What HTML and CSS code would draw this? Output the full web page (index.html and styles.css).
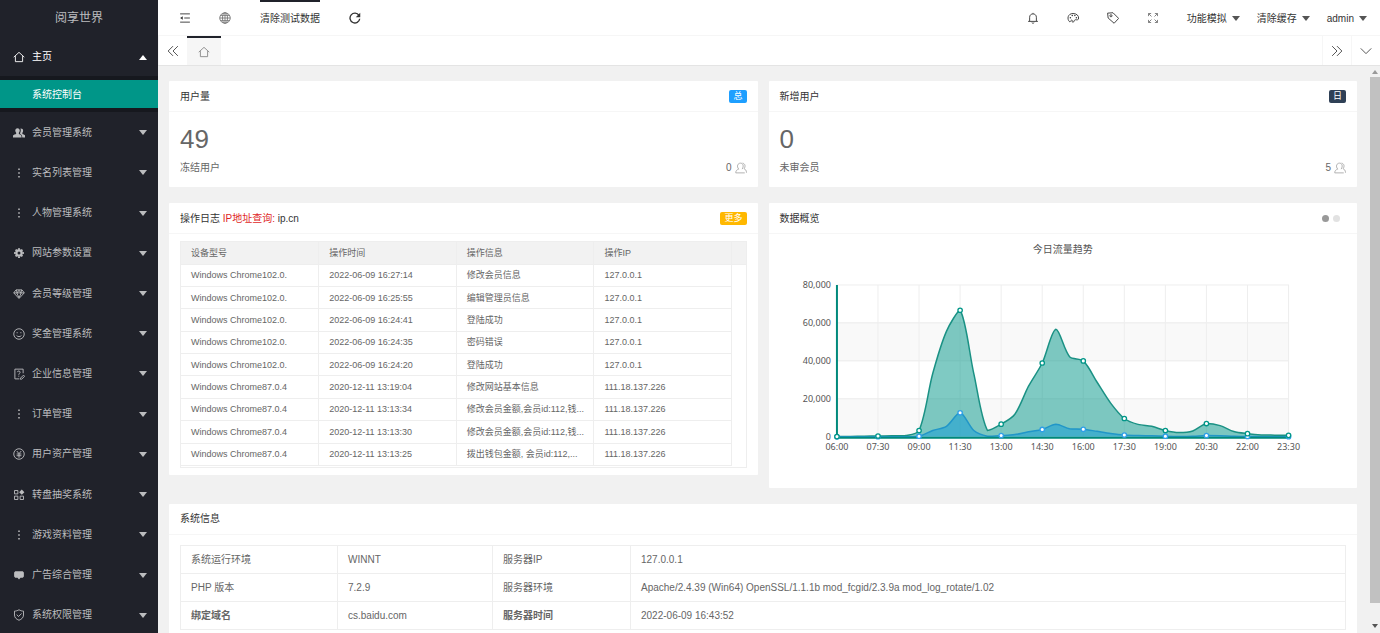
FILE: index.html
```
<!doctype html>
<html lang="zh-CN">
<head>
<meta charset="utf-8">
<title>阅享世界</title>
<link rel="stylesheet" href="styles.css">
</head>
<body>
<svg class="defs" aria-hidden="true">
	<symbol id="i-home" viewBox="0 0 16 16"><path d="M1 8.2 8 1.8l7 6.4M3.2 6.8v7.4h9.6V6.8"/></symbol>
	<symbol id="i-users" viewBox="0 0 16 16"><path class="fill" d="M6 1.500c2 0 3 1.300 3 3.200 0 1.400-.5 2.300-1.200 3v1.600c2 .8 3.700 1.300 3.700 4.700H-1c0-3.400 3-3.900 5.200-4.700V7.700C3.500 7 3 6.100 3 4.700 3 2.800 4 1.500 6 1.500z"/><path class="fill" d="M10 2c2.300-.2 3.500 1 3.500 3 0 1.200-.5 2-1 2.600v1.600c2 .7 4.500 1.500 4.500 4.800h-4.600c0-3-1.200-4-2.900-4.800V7.900C10.500 6 10.600 4 10 2z"/></symbol>
	<symbol id="i-dots" viewBox="0 0 16 16"><path class="fill" d="M7 2h2v2H7zM7 7h2v2H7zM7 12h2v2H7z"/></symbol>
	<symbol id="i-gear" viewBox="0 0 16 16"><circle cx="8" cy="8" r="3.500" stroke-width="3"/><path stroke-width="2.600" d="M8 1.500v2M8 12.500v2M1.500 8h2M12.500 8h2M3.500 3.500l1.300 1.300M11.200 11.200l1.300 1.300M12.500 3.500l-1.300 1.300M4.800 11.200l-1.300 1.300"/></symbol>
	<symbol id="i-gem" viewBox="0 0 16 16"><path d="M4 2.500h8L15 6.500 8 14 1 6.500zM1 6.500h14M5 6.500 8 13l3-6.500M4.500 2.800 5.500 6.500 8 3l2.500 3.500 1-3.700"/></symbol>
	<symbol id="i-smile" viewBox="0 0 16 16"><circle cx="8" cy="8" r="7"/><path d="M5.500 5.500v1.500M10.500 5.500v1.500M4.800 10c1.500 2 4.900 2 6.400 0"/></symbol>
	<symbol id="i-form" viewBox="0 0 16 16"><path d="M13.500 7V1.500h-11v13h6M5.800 5.500c.2-2 3.700-2 3.700.2C9.500 7.200 7.700 7 7.700 9M7.700 10.300v1.200M10 13.500l4-4 1.500 1.500-4 4H10z"/></symbol>
	<symbol id="i-yen" viewBox="0 0 16 16"><circle cx="8" cy="8" r="7"/><path d="M5 4l3 3.500L11 4M4.800 8h6.400M4.800 10.300h6.400M8 7.500V13"/></symbol>
	<symbol id="i-grid" viewBox="0 0 16 16"><path d="M2 2h4.500v4.500H2zM2 9.500h4.500V14H2zM9.500 9.500H14V14H9.500z"/><path class="fill" d="M11.700.8l3.500 3.500-3.500 3.500-3.500-3.500z"/></symbol>
	<symbol id="i-board" viewBox="0 0 16 16"><path class="fill" d="M3 3h10l1.500 1.500v5.500L13 11.500h-3l-2 2.500-2-2.500H3L1.500 10V4.500z"/></symbol>
	<symbol id="i-shield" viewBox="0 0 16 16"><path d="M8 1c2 1.300 4 1.800 6 1.800V8c0 3.500-2.500 5.700-6 7-3.500-1.300-6-3.500-6-7V2.800C4 2.800 6 2.300 8 1zM5 7.500l2.300 2.500L11.500 6"/></symbol>
	<symbol id="i-menu" viewBox="0 0 16 16"><path d="M1.500 2.500h13M7 8h7.500M1.500 13.500h13"/><path class="fill" d="M1.500 8 5 5.800v4.400z"/></symbol>
	<symbol id="i-globe" viewBox="0 0 16 16"><circle cx="8" cy="8" r="7"/><ellipse cx="8" cy="8" rx="3.300" ry="7"/><path d="M8 1v14M1 8h14M2.200 4.500h11.600M2.200 11.500h11.600"/></symbol>
	<symbol id="i-refresh" viewBox="0 0 16 16"><path stroke-width="1.800" d="M13.300 4.500A6.500 6.500 0 1 0 14.300 9"/><path class="fill" d="M15 1v6H9z"/></symbol>
	<symbol id="i-bell" viewBox="0 0 16 16"><path d="M8 1.200v1M3.500 12.200V7c0-6 9-6 9 0v5.200M1.500 12.500h13M6.300 14c.6 1.200 2.800 1.200 3.400 0"/></symbol>
	<symbol id="i-palette" viewBox="0 0 16 16"><path d="M3.500 13C-.5 9.500 1 2 8 2c5 0 7.500 3 7.500 6 0 3-2.500 2.500-4 2.300-2 0-1.500 1.700-2.500 2.700-1.500 1.300-2.500.3-2-1 .5-1.700-1.700-1.200-2-.3-.3.700-.5 1.300-1.500 1.300z"/><circle class="fill" cx="4.500" cy="7.500" r="1"/><circle class="fill" cx="7" cy="4.800" r="1"/><circle class="fill" cx="10.500" cy="4.800" r="1"/><circle class="fill" cx="12.500" cy="7.500" r="1"/></symbol>
	<symbol id="i-tag" viewBox="0 0 16 16"><path d="M.8 1.500 8 1l7.500 7.500-6 6.500L1.500 8z"/><circle cx="5.300" cy="5" r="1.400"/></symbol>
	<symbol id="i-full" viewBox="0 0 16 16"><path d="M2 5.500V2h3.500M2 2l4 4M10.500 2H14v3.500M14 2l-4 4M2 10.500V14h3.500M2 14l4-4M14 10.500V14h-3.500M14 14l-4-4"/></symbol>
	<symbol id="i-left" viewBox="0 0 16 16"><path d="M8 1.500 1.500 8 8 14.500M14.500 1.500 8 8l6.500 6.500"/></symbol>
	<symbol id="i-right" viewBox="0 0 16 16"><path d="M1.500 1.500 8 8l-6.500 6.500M8 1.500 14.500 8 8 14.500"/></symbol>
	<symbol id="i-down" viewBox="0 0 16 16"><path d="M1 4.500l7 7 7-7"/></symbol>
	<symbol id="i-people" viewBox="0 0 16 16"><path d="M1 14.500c0-3 1.500-4.200 4-5C1.500 5.500 4 1.500 7.300 1.500s5 4 2.200 8M1 14.500h12M10 1.500c3.500.5 4.500 4.500 2 7.500 2 .8 3.300 2 3.300 5.300"/></symbol>
</svg>

<div class="app">
	<aside class="side">
		<h1 class="logo">阅享世界</h1>
		<nav>
			<a class="item open" href="#"><svg class="icon"><use href="#i-home"/></svg>主页<i class="caret"></i></a>
			<div class="child"><a href="#">系统控制台</a></div>
			<div class="list">
				<a class="item" href="#"><svg class="icon"><use href="#i-users"/></svg>会员管理系统<i class="caret"></i></a>
				<a class="item" href="#"><svg class="icon"><use href="#i-dots"/></svg>实名列表管理<i class="caret"></i></a>
				<a class="item" href="#"><svg class="icon"><use href="#i-dots"/></svg>人物管理系统<i class="caret"></i></a>
				<a class="item" href="#"><svg class="icon"><use href="#i-gear"/></svg>网站参数设置<i class="caret"></i></a>
				<a class="item" href="#"><svg class="icon"><use href="#i-gem"/></svg>会员等级管理<i class="caret"></i></a>
				<a class="item" href="#"><svg class="icon"><use href="#i-smile"/></svg>奖金管理系统<i class="caret"></i></a>
				<a class="item" href="#"><svg class="icon"><use href="#i-form"/></svg>企业信息管理<i class="caret"></i></a>
				<a class="item" href="#"><svg class="icon"><use href="#i-dots"/></svg>订单管理<i class="caret"></i></a>
				<a class="item" href="#"><svg class="icon"><use href="#i-yen"/></svg>用户资产管理<i class="caret"></i></a>
				<a class="item" href="#"><svg class="icon"><use href="#i-grid"/></svg>转盘抽奖系统<i class="caret"></i></a>
				<a class="item" href="#"><svg class="icon"><use href="#i-dots"/></svg>游戏资料管理<i class="caret"></i></a>
				<a class="item" href="#"><svg class="icon"><use href="#i-board"/></svg>广告综合管理<i class="caret"></i></a>
				<a class="item" href="#"><svg class="icon"><use href="#i-shield"/></svg>系统权限管理<i class="caret"></i></a>
			</div>
		</nav>
	</aside>

	<div class="main">
		<header class="top">
			<button class="ibtn" aria-label="侧边伸缩"><svg class="icon"><use href="#i-menu"/></svg></button>
			<button class="ibtn light" aria-label="前台"><svg class="icon"><use href="#i-globe"/></svg></button>
			<a class="clear" href="#">清除测试数据</a>
			<button class="ibtn" aria-label="刷新"><svg class="icon"><use href="#i-refresh"/></svg></button>
			<div class="right">
				<button class="ibtn" aria-label="消息"><svg class="icon"><use href="#i-bell"/></svg></button>
				<button class="ibtn" aria-label="主题"><svg class="icon"><use href="#i-palette"/></svg></button>
				<button class="ibtn" aria-label="便签"><svg class="icon"><use href="#i-tag"/></svg></button>
				<button class="ibtn light" aria-label="全屏"><svg class="icon"><use href="#i-full"/></svg></button>
				<button class="drop">功能模拟<i class="caret"></i></button>
				<button class="drop">清除缓存<i class="caret"></i></button>
				<button class="drop">admin<i class="caret"></i></button>
			</div>
		</header>
		<div class="tabs">
			<button class="tbtn" aria-label="向左"><svg class="icon"><use href="#i-left"/></svg></button>
			<a class="tab" href="#" aria-label="主页"><svg class="icon"><use href="#i-home"/></svg></a>
			<button class="tbtn end" aria-label="向右"><svg class="icon"><use href="#i-right"/></svg></button>
			<button class="tbtn" aria-label="展开"><svg class="icon"><use href="#i-down"/></svg></button>
		</div>

		<div class="view">
			<div class="content">
				<section class="card">
					<h2>用户量<span class="badge blue">总</span></h2>
					<div class="stat">
						<p class="num">49</p>
						<p class="sub">冻结用户<span>0<svg class="icon"><use href="#i-people"/></svg></span></p>
					</div>
				</section>
				<section class="card">
					<h2>新增用户<span class="badge dark">日</span></h2>
					<div class="stat">
						<p class="num">0</p>
						<p class="sub">未审会员<span>5<svg class="icon"><use href="#i-people"/></svg></span></p>
					</div>
				</section>

				<section class="card log">
					<h2>操作日志&nbsp;<span class="red">IP地址查询:</span>&nbsp;ip.cn<a class="badge orange" href="#">更多</a></h2>
					<div class="logbox">
						<table>
							<thead>
								<tr><th>设备型号</th><th>操作时间</th><th>操作信息</th><th>操作IP</th><th class="gutter"></th></tr>
							</thead>
							<tbody>
								<tr><td>Windows Chrome102.0.</td><td>2022-06-09 16:27:14</td><td>修改会员信息</td><td>127.0.0.1</td></tr>
								<tr><td>Windows Chrome102.0.</td><td>2022-06-09 16:25:55</td><td>编辑管理员信息</td><td>127.0.0.1</td></tr>
								<tr><td>Windows Chrome102.0.</td><td>2022-06-09 16:24:41</td><td>登陆成功</td><td>127.0.0.1</td></tr>
								<tr><td>Windows Chrome102.0.</td><td>2022-06-09 16:24:35</td><td>密码错误</td><td>127.0.0.1</td></tr>
								<tr><td>Windows Chrome102.0.</td><td>2022-06-09 16:24:20</td><td>登陆成功</td><td>127.0.0.1</td></tr>
								<tr><td>Windows Chrome87.0.4</td><td>2020-12-11 13:19:04</td><td>修改网站基本信息</td><td>111.18.137.226</td></tr>
								<tr><td>Windows Chrome87.0.4</td><td>2020-12-11 13:13:34</td><td>修改会员金额,会员id:112,钱...</td><td>111.18.137.226</td></tr>
								<tr><td>Windows Chrome87.0.4</td><td>2020-12-11 13:13:30</td><td>修改会员金额,会员id:112,钱...</td><td>111.18.137.226</td></tr>
								<tr><td>Windows Chrome87.0.4</td><td>2020-12-11 13:13:25</td><td>拨出钱包金额, 会员id:112,...</td><td>111.18.137.226</td></tr>
							</tbody>
						</table>
					</div>
				</section>

				<section class="card">
					<h2>数据概览<span class="dots"><i class="on"></i><i></i></span></h2>
					<svg class="chart" id="chart" viewBox="0 0 589 254"></svg>
				</section>

				<section class="card wide">
					<h2>系统信息</h2>
					<table class="info">
						<tr><td>系统运行环境</td><td>WINNT</td><td>服务器IP</td><td>127.0.0.1</td></tr>
						<tr><td>PHP 版本</td><td>7.2.9</td><td>服务器环境</td><td>Apache/2.4.39 (Win64) OpenSSL/1.1.1b mod_fcgid/2.3.9a mod_log_rotate/1.02</td></tr>
						<tr><th>绑定域名</th><td>cs.baidu.com</td><th>服务器时间</th><td>2022-06-09 16:43:52</td></tr>
					</table>
				</section>
			</div>
			<div class="bar"><i class="caret"></i><div class="thumb"></div><i class="caret"></i></div>
		</div>
	</div>
</div>
<script src="chart.js"></script>
</body>
</html>
```
FILE: styles.css
```
*{
	margin:0;
	padding:0;
	box-sizing:border-box;
}
body{
	font:10px/20px "Liberation Sans","Noto Sans CJK SC",sans-serif;
	color:#555;
	background:#f1f1f1;
}
a{color:inherit;text-decoration:none;}
button{
	border:0;
	background:none;
	font:inherit;
	color:inherit;
}
.defs{display:none;}
.icon{
	width:12px;
	height:12px;
	fill:none;
	stroke:currentColor;
	stroke-width:1.2;
	flex:none;
}
.fill{fill:currentColor;stroke:none;}
.caret{
	border:4px solid transparent;
	border-top:5px solid currentColor;
	border-bottom:0;
}
.app{
	display:flex;
	height:100vh;
	overflow:hidden;
}

/* 左侧菜单 */
.side{
	width:158px;
	flex:none;
	background:#20222a;
	color:#bcbdbf;
}
.logo{
	font-size:12px;
	font-weight:normal;
	line-height:36px;
	text-align:center;
}
.item{
	display:flex;
	align-items:center;
	gap:7px;
	height:40px;
	padding:2px 11px 0 13px;
}
.item .caret{margin-left:auto;}
.open{color:#fff;}
.open .caret{
	border-top:0;
	border-bottom:5px solid currentColor;
}
.child{
	padding:4px 0;
	background:#16181e;
}
.child a{
	display:block;
	padding:2px 0 0 32px;
	line-height:26px;
	background:#009688;
	color:#fff;
}
.list{
	display:grid;
	grid-auto-rows:1fr;
	height:523px;
}
.list .item{
	height:auto;
	padding-top:1px;
}

/* 头部 */
.main{
	flex:1;
	min-width:0;
	display:flex;
	flex-direction:column;
}
.top{
	display:flex;
	height:36px;
	padding:0 10px 0 7px;
	background:#fff;
	border-bottom:1px solid #f6f6f6;
	color:#333;
}
.ibtn{
	width:40px;
	display:flex;
	align-items:center;
	justify-content:center;
	padding-top:1px;
}
.light{color:#777;}
.clear{
	margin:0 15px;
	border-top:2px solid #20222a;
	line-height:33px;
}
.right{
	display:flex;
	margin-left:auto;
}
.drop{
	display:flex;
	align-items:center;
	gap:5px;
	padding:2px 3px 0 14px;
}
.drop .caret{color:#555;}
.tabs{
	display:flex;
	height:29px;
	background:#fff;
	box-shadow:0 1px 0 #e4e4e4;
	color:#444;
	z-index:1;
}
.tbtn{
	width:29px;
	display:flex;
	align-items:center;
	justify-content:center;
	border-left:1px solid #f6f6f6;
}
.end{margin-left:auto;}
.tab{
	width:34px;
	display:flex;
	align-items:center;
	justify-content:center;
	background:#f6f6f6;
	border-top:2px solid #20222a;
	color:#888;
}

/* 内容 */
.view{
	flex:1;
	min-height:0;
	display:flex;
}
.content{
	flex:1;
	min-width:0;
	overflow:auto;
	scrollbar-width:none;
	display:grid;
	grid-template-columns:1fr 1fr;
	gap:16px 11px;
	align-content:start;
	align-items:start;
	padding:16px 12px 16px 11px;
}
.bar{
	width:11px;
	display:flex;
	flex-direction:column;
	align-items:center;
	gap:3px;
	padding:5px 0;
	color:#555;
}
.bar .caret{border-width:4px 3px 0;}
.bar .caret:first-child{
	border-width:0 3px 4px;
	border-bottom-color:#999;
	border-bottom-style:solid;
}
.thumb{
	width:10px;
	flex:1;
	margin-bottom:18px;
	background:#c1c1c1;
}
.card{
	background:#fff;
	border-radius:1px;
}
.card h2{
	display:flex;
	align-items:center;
	height:31px;
	padding:1px 11px 0;
	border-bottom:1px solid #f6f6f6;
	font-size:10px;
	font-weight:normal;
	color:#333;
}
.wide{grid-column:1 / 3;}
.badge{
	margin-left:auto;
	padding:0 4px;
	border-radius:2px;
	font-size:9px;
	line-height:13px;
	color:#fff;
}
.blue{background:#1e9fff;}
.dark{background:#2f4056;}
.orange{background:#ffb800;}
.red{color:#e01f1f;}
.stat{padding:9px 11px 8px;}
.num{
	font-size:26px;
	line-height:36px;
	color:#666;
}
.sub{
	display:flex;
	justify-content:space-between;
	line-height:22px;
	color:#666;
}
.sub span{
	display:flex;
	align-items:center;
	gap:3px;
}
.sub .icon{color:#aaa;}
.log{padding-bottom:7px;}
.logbox{
	margin:7px 11px 0;
	padding-bottom:1px;
	border:1px solid #eee;
}
.logbox table{
	width:100%;
	height:224px;
	table-layout:fixed;
	border-collapse:collapse;
	font-size:9px;
	line-height:14px;
	color:#666;
}
.logbox th,
.logbox td{
	padding-left:10px;
	border-right:1px solid #eee;
	border-bottom:1px solid #eee;
	font-weight:normal;
	text-align:left;
	white-space:nowrap;
}
.logbox th{
	height:22px;
	background:#f2f2f2;
}
.logbox .gutter{
	width:14px;
	padding:0;
	border-right:0;
}
.dots{
	display:flex;
	gap:4px;
	margin-left:auto;
	padding-right:6px;
}
.dots i{
	width:7px;
	height:7px;
	border-radius:50%;
	background:#e2e2e2;
}
.dots .on{background:#999;}
.chart{
	display:block;
	width:100%;
}
.chart text{
	font:9px "Noto Sans","Noto Sans CJK SC",sans-serif;
	fill:#555;
	text-anchor:middle;
}
.chart .ylab{text-anchor:end;}
.chart .title{font-size:10px;}
.info{
	width:calc(100% - 22px);
	margin:10px 11px;
	table-layout:fixed;
	border-collapse:collapse;
	color:#666;
}
.info td,
.info th{
	height:28px;
	padding:2px 10px 0;
	border:1px solid #eee;
	text-align:left;
}
.info td:nth-child(1){width:157px;}
.info td:nth-child(2){width:155px;}
.info td:nth-child(3){width:138px;}
```
FILE: chart.js
```
var pv=[111,222,333,444,555,666,3333,33333,55555,66666,33333,3333,6666,11888,26666,38888,56666,42222,39999,28888,17777,9666,6555,5555,3333,2222,3111,6999,5888,2777,1666,999,888,777];
var uv=[11,22,33,44,55,66,333,3333,5555,12666,3333,333,666,1188,2666,3888,6666,4222,3999,2888,1777,966,655,555,333,222,311,699,588,277,166,99,88,77];
var times=["06:00","07:30","09:00","11:30","13:00","14:30","16:00","17:30","19:00","20:30","22:00","23:30"];
var left=68,right=520,top0=51,bottom=203;

function px(i){ return left+(right-left)*i/(pv.length-1); }
function py(v){ return bottom-(bottom-top0)*v/80000; }

// 平滑曲线
function curve(data){
	var p=data.map(function(v,i){ return [px(i),py(v)]; });
	var cps=p.map(function(c,i){
		var a=p[i-1]||c,b=p[i+1]||c;
		var vx=(b[0]-a[0])*0.3,vy=(b[1]-a[1])*0.3;
		var d0=Math.hypot(c[0]-a[0],c[1]-a[1]),d1=Math.hypot(c[0]-b[0],c[1]-b[1]);
		var s=d0+d1;
		function clamp(y,o){ return Math.max(Math.min(c[1],o[1]),Math.min(Math.max(c[1],o[1]),y)); }
		return [[c[0]-vx*d0/s,clamp(c[1]-vy*d0/s,a)],[c[0]+vx*d1/s,clamp(c[1]+vy*d1/s,b)]];
	});
	var d="M"+p[0];
	for(var i=1;i<p.length;i++){
		d+="C"+cps[i-1][1]+" "+cps[i][0]+" "+p[i];
	}
	return d;
}

function series(data,line,fill){
	var d=curve(data);
	return '<path d="'+d+'L'+right+' '+bottom+'L'+left+' '+bottom+'Z" fill="'+fill+'" fill-opacity=".5"/>'
		+'<path d="'+d+'" fill="none" stroke="'+line+'" stroke-width="1.5"/>';
}
function marks(data,line){
	var s="";
	for(var i=0;i<data.length;i+=3){
		s+='<circle cx="'+px(i)+'" cy="'+py(data[i])+'" r="2.2" fill="#fff" stroke="'+line+'" stroke-width="1.3"/>';
	}
	return s;
}

var html='<text class="title" x="294" y="19">今日流量趋势</text>';
for(var k=0;k<4;k++){
	var y=top0+k*38;
	html+='<rect x="'+left+'" y="'+y+'" width="'+(right-left)+'" height="38" fill="'+(k%2?"#f9f9f9":"#fff")+'" stroke="#eee"/>';
}
for(k=0;k<5;k++){
	html+='<text class="ylab" x="62" y="'+(top0+k*38+3)+'">'+(80000-k*20000).toLocaleString("en-US")+'</text>';
}
times.forEach(function(t,i){
	var x=px(i*3);
	html+='<path d="M'+x+' '+top0+'V'+bottom+'" stroke="#eee"/><text x="'+x+'" y="216">'+t+'</text>';
});
html+=series(pv,"#1a9184","#009688")+series(uv,"#2196c8","#0b9ad8");
html+='<path d="M'+left+' '+top0+'V'+(bottom+1)+'H'+right+'" fill="none" stroke="#00897b" stroke-width="2"/>';
html+=marks(uv,"#2f9fe8")+marks(pv,"#009688");
document.getElementById("chart").innerHTML=html;
```
